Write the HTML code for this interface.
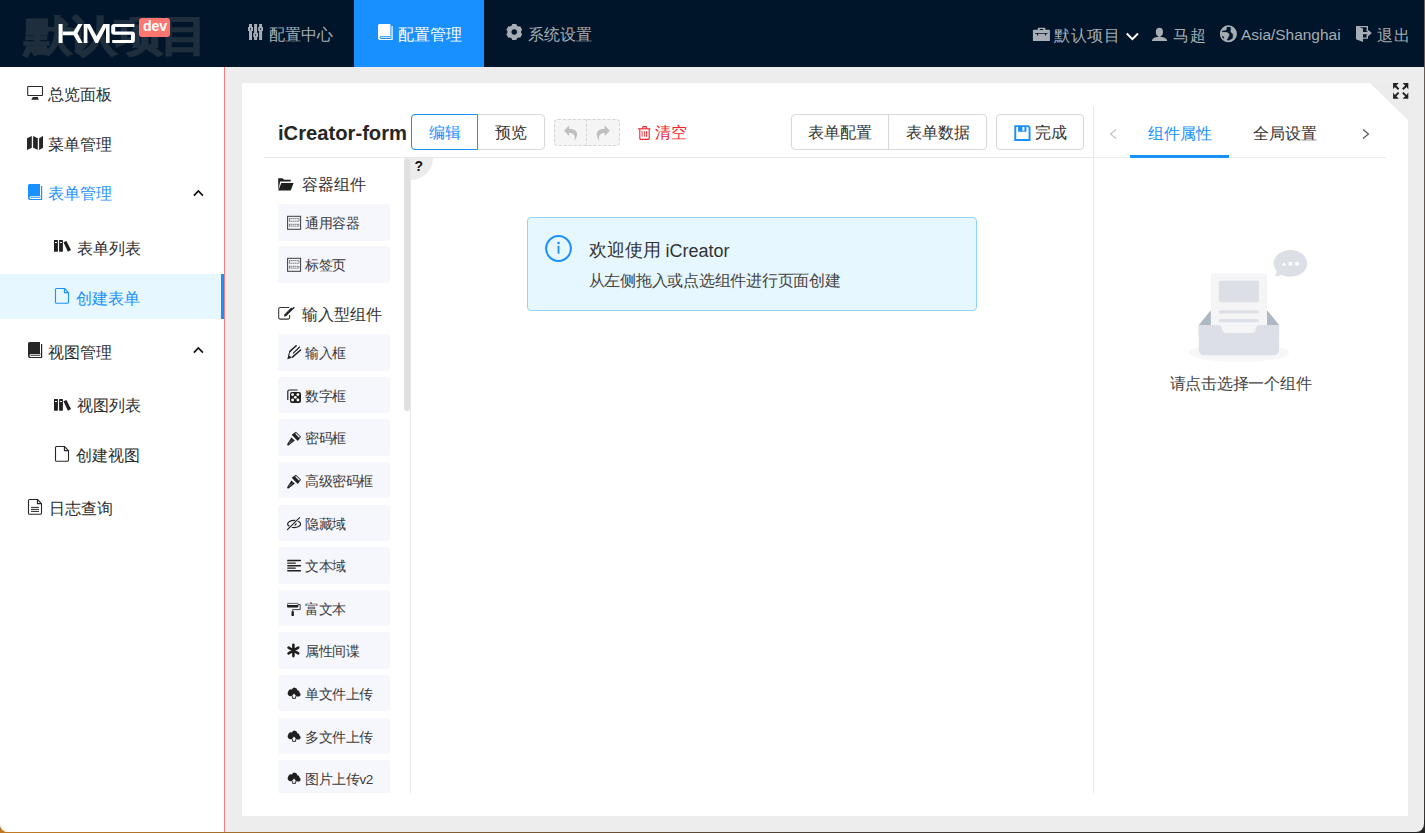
<!DOCTYPE html>
<html><head><meta charset="utf-8">
<style>
*{box-sizing:border-box;margin:0;padding:0}
html,body{width:1425px;height:833px;overflow:hidden;background:linear-gradient(90deg,#c27a22 0,#9a6a30 300px,#4a4038 800px,#252525 1425px);font-family:"Liberation Sans",sans-serif}
.a{position:absolute;white-space:nowrap}
#win{position:absolute;left:0;top:0;width:1424px;height:832px;background:#ededed;overflow:hidden;border-radius:0 0 8px 8px}
#hdr{position:absolute;left:0;top:0;width:1424px;height:67px;background:#001529}
.ht{color:#a6adb4;font-size:15.75px;line-height:20px}
#side{position:absolute;left:0;top:67px;width:225px;height:765px;background:#fff;border-right:1px solid #ff7b7b}
.st{color:#2b2b2b;font-size:15.75px;line-height:20px}
#card{position:absolute;left:242px;top:83px;width:1166px;height:733px;background:#fff}
.ib{position:absolute;left:278px;width:112px;height:36.4px;background:#f6f7fd;border-radius:3px}
.it{color:#3a3a3a;font-size:13.5px;line-height:18px;letter-spacing:-0.4px}
svg{position:absolute;overflow:visible}
</style></head><body>
<div style="position:absolute;left:1424px;top:0;width:1px;height:820px;background:linear-gradient(180deg,#6e5e58 0,#5e4b3d 400px,#3a3530 820px)"></div>
<div id="win">
<div id="hdr"></div>
<div id="side"></div>
<div id="card"></div>
</div>
<!-- HEADER -->
<div class="a" style="left:24px;top:9.5px;font-size:45px;line-height:56px;font-weight:bold;color:#1e2e3c;-webkit-text-stroke:1.4px #1e2e3c;letter-spacing:-2.6px;transform:scale(1.07,0.94);transform-origin:0 0">默认项目</div>
<svg style="left:55px;top:20px" width="85" height="26" viewBox="55 20 85 26"><g fill="#fff">
<path d="M58.6 24 H62.6 V43 H58.6Z"/>
<path d="M62.6 31.4 H73.6 L78.2 24 H82.6 L77.4 33.3 L82.6 43 H78.2 L73.6 35.2 H62.6Z"/>
<path d="M83.7 24 H89.9 L96.6 36.2 L103.4 24 H109.6 V43 H106 V27.6 L97.8 43 H95.3 L87.4 27.6 V43 H83.7Z"/>
<path d="M114.2 24 H134.4 V27.1 H115.2 V31.6 H131.9 A3 3 0 0 1 134.9 34.6 V39.8 A3 3 0 0 1 131.9 43 H112.2 V39.9 H131 V34.8 H114.2 A3 3 0 0 1 111.2 31.8 V27 A3 3 0 0 1 114.2 24Z"/>
</g></svg>
<div class="a" style="left:139px;top:18px;width:31px;height:19px;background:#ff7570;border-radius:3px;color:#fff;font-weight:bold;font-size:14.2px;line-height:16.5px;text-align:center;padding-left:1px;letter-spacing:-0.2px">dev</div>
<svg style="left:244px;top:20px" width="24" height="24" viewBox="244 20 24 24"><path fill="#a6adb4" fill-rule="evenodd" d="M249 24 H252 V27 H253 V31 H252 V40 H249 V31 H248 V27 H249Z M250 28.2 V29.8 H251 V28.2Z M254.1 24 H257.1 V33 H258 V37 H257.1 V40 H254.1 V37 H253.2 V33 H254.1Z M255.1 34.2 V35.8 H256.1 V34.2Z M259.1 24 H262.1 V27 H263 V31 H262.1 V40 H259.1 V31 H258.2 V27 H259.1Z M260.1 28.2 V29.8 H261.1 V28.2Z"/></svg>
<div class="a ht" style="left:269px;top:25px">配置中心</div>
<div class="a" style="left:354px;top:0;width:130px;height:67px;background:#1890ff"></div>
<svg style="left:377.6px;top:24px" width="15" height="16" viewBox="0 0 15 16"><g transform="scale(1.035,1)"><path fill="#fff" d="M1.5 0 H12 V11.9 H0 V1.5 A1.5 1.5 0 0 1 1.5 0Z M13 2 H14.2 V12 H13Z M0 11.8 H14.2 V16 H2 A2 2 0 0 1 0 14Z"/><path fill="#1890ff" d="M2.9 12.2 H13 V15 H2.9 A1.4 1.4 0 0 1 2.9 12.2Z"/><path fill="#fff" d="M2.8 13.15 H12.2 V14.05 H2.8 A0.45 0.45 0 0 1 2.8 13.15Z"/></g></svg>
<div class="a ht" style="left:398px;top:24.5px;color:#fff">配置管理</div>
<svg style="left:500px;top:20px" width="26" height="26" viewBox="500 20 26 26"><path fill="#a6adb4" fill-rule="evenodd" d="M511.55 25.70 L512.25 24.00 L516.25 24.00 L516.95 25.70 A6.3 6.3 0 0 1 518.36 26.51 L520.18 26.27 L522.18 29.73 L521.06 31.19 A6.3 6.3 0 0 1 521.06 32.81 L522.18 34.27 L520.18 37.73 L518.36 37.49 A6.3 6.3 0 0 1 516.95 38.30 L516.25 40.00 L512.25 40.00 L511.55 38.30 A6.3 6.3 0 0 1 510.14 37.49 L508.32 37.73 L506.32 34.27 L507.44 32.81 A6.3 6.3 0 0 1 507.44 31.19 L506.32 29.73 L508.32 26.27 L510.14 26.51 A6.3 6.3 0 0 1 511.55 25.70Z M514.25 29.20 A2.7 2.8 0 1 0 514.25 34.80 A2.7 2.8 0 1 0 514.25 29.20Z"/></svg>
<div class="a ht" style="left:528px;top:24.5px">系统设置</div>

<svg style="left:1030px;top:22px" width="24" height="24" viewBox="1030 22 24 24"><path fill="#a6adb4" fill-rule="evenodd" d="M1038.3 27.8 H1044.8 A0.5 0.5 0 0 1 1045.3 28.3 V29.8 H1049.4 A0.5 0.5 0 0 1 1049.9 30.3 V40.5 A0.5 0.5 0 0 1 1049.4 41 H1033.4 A0.5 0.5 0 0 1 1032.9 40.5 V30.3 A0.5 0.5 0 0 1 1033.4 29.8 H1037.8 V28.3 A0.5 0.5 0 0 1 1038.3 27.8Z M1039.9 29 V29.9 H1043.1 V29 Z"/><path fill="#001529" d="M1035.4 33 H1047.4 A0.4 0.4 0 0 1 1047.4 33.8 H1046.1 V35.4 H1045 V33.8 H1038.1 V35.4 H1037 V33.8 H1035.4 A0.4 0.4 0 0 1 1035.4 33Z"/></svg>
<div class="a ht" style="left:1054px;top:26px;letter-spacing:0.6px">默认项目</div>
<svg style="left:1120px;top:26px" width="24" height="20" viewBox="1120 26 24 20"><path d="M1126.8 33.5 L1132.4 39.1 L1138 33.5" fill="none" stroke="#fff" stroke-width="2"/></svg>
<svg style="left:1148px;top:22px" width="24" height="24" viewBox="1148 22 24 24"><g fill="#a6adb4"><ellipse cx="1159.4" cy="32.1" rx="3.6" ry="4.3"/><path d="M1158.4 36 H1160.4 V36.7 C1164 36.9 1167.2 38.5 1167.2 41 H1151.9 C1151.9 38.5 1155 36.9 1158.4 36.7Z"/></g></svg>
<div class="a ht" style="left:1173px;top:26px;letter-spacing:0.6px">马超</div>
<svg style="left:1216px;top:22px" width="24" height="24" viewBox="1216 22 24 24"><circle cx="1228.4" cy="33.9" r="8.3" fill="#a6adb4"/><g fill="#001529" stroke="#001529" stroke-width="0.3" stroke-linejoin="round"><path d="M1227.00 27.05 L1230.40 27.05 L1230.70 29.50 L1230.30 31.50 L1231.60 33.20 L1232.70 34.10 L1232.70 38.10 L1231.00 39.30 L1228.40 40.40 L1227.00 39.90 L1228.10 38.10 L1229.30 35.80 L1229.50 34.10 L1228.40 33.00 L1227.00 32.10 L1224.60 31.90 L1222.05 31.80 L1222.20 30.90 L1225.50 30.60 L1226.70 29.50Z"/><path d="M1222.3 36 C1223.2 36.1 1224 37 1224 37.9 C1224 38.4 1223.5 38.5 1223.1 38.2 C1222.6 37.7 1222.2 36.9 1222.3 36Z"/></g><circle cx="1228.4" cy="33.9" r="7.75" fill="none" stroke="#a6adb4" stroke-width="1.2"/></svg>
<div class="a ht" style="left:1241px;top:25px;font-size:15.45px">Asia/Shanghai</div>
<svg style="left:1352px;top:22px" width="24" height="24" viewBox="1352 22 24 24"><g fill="#a6adb4"><path d="M1356 26 H1368 V31.6 H1366.6 V27.3 H1359.5 L1363 28.5 V41.9 L1356 39.3Z"/><path d="M1366.6 34.3 H1368 V38.7 H1363 V37.6 H1366.6Z"/><path d="M1363 31.9 H1367.8 V29.7 L1371.9 33.1 L1367.8 36.5 V34.2 H1363Z"/></g></svg>
<div class="a ht" style="left:1377px;top:26px;letter-spacing:0.8px">退出</div>
<!-- SIDEBAR -->
<div class="a" style="left:0;top:274px;width:221px;height:45px;background:#e6f7ff"></div>
<div class="a" style="left:221px;top:274px;width:3px;height:45px;background:#1890ff"></div>
<svg style="left:24px;top:81px" width="24" height="24" viewBox="24 81 24 24"><rect x="27.7" y="86.4" width="14.8" height="9" rx="0.5" fill="none" stroke="#262626" stroke-width="1.05"/><path d="M32.9 97 H37.8 L38.7 99.7 H31.2Z" fill="#262626"/></svg>
<div class="a st" style="left:48px;top:85px">总览面板</div>
<svg style="left:24px;top:131px" width="24" height="24" viewBox="24 131 24 24"><g fill="#262626"><path d="M27 138.2 L31.8 136 V147.7 L27 150Z"/><path d="M33.1 136 L37.8 138.3 V149.8 L33.1 147.7Z"/><path d="M39.1 138.3 L43 135.9 V147.7 L39.1 150Z"/></g></svg>
<div class="a st" style="left:48px;top:134.5px">菜单管理</div>
<svg style="left:28px;top:184px" width="15" height="16" viewBox="0 0 15 16"><g transform="scale(1.0,1)"><path fill="#1890ff" d="M1.5 0 H12 V11.9 H0 V1.5 A1.5 1.5 0 0 1 1.5 0Z M13 2 H14.2 V12 H13Z M0 11.8 H14.2 V16 H2 A2 2 0 0 1 0 14Z"/><path fill="#fff" d="M2.9 12.2 H13 V15 H2.9 A1.4 1.4 0 0 1 2.9 12.2Z"/><path fill="#1890ff" d="M2.8 13.15 H12.2 V14.05 H2.8 A0.45 0.45 0 0 1 2.8 13.15Z"/></g></svg>
<div class="a st" style="left:48px;top:184px;color:#1890ff">表单管理</div>
<svg style="left:188px;top:182px" width="20" height="20" viewBox="188 182 20 20"><path d="M193.9 195.6 L198.4 190.9 L202.9 195.6" fill="none" stroke="#111" stroke-width="1.7"/></svg>
<svg style="left:50px;top:234px" width="24" height="24" viewBox="50 234 24 24"><path fill="#1f1f1f" fill-rule="evenodd" d="M54.4 239.9 H57.5 A0.4 0.4 0 0 1 57.9 240.3 V251.3 A0.4 0.4 0 0 1 57.5 251.7 H54.4 A0.4 0.4 0 0 1 54 251.3 V240.3 A0.4 0.4 0 0 1 54.4 239.9Z M55 242.1 V242.9 H56.9 V242.1Z M59.5 239.9 H62.5 A0.4 0.4 0 0 1 62.9 240.3 V251.3 A0.4 0.4 0 0 1 62.5 251.7 H59.5 A0.4 0.4 0 0 1 59.1 251.3 V240.3 A0.4 0.4 0 0 1 59.5 239.9Z M60 242.1 V242.9 H62 V242.1Z"/><path fill="#1f1f1f" d="M63.5 242.2 L66.4 241.1 L71 250.1 L67.9 251.7Z"/></svg>
<div class="a st" style="left:77px;top:239px">表单列表</div>
<svg style="left:50px;top:284px" width="24" height="24" viewBox="50 284 24 24"><path d="M56.6 288.5 H64.4 L68.5 292.6 V302 A1.3 1.3 0 0 1 67.2 303.3 H56.6 A1.1 1.1 0 0 1 55.5 302.2 V289.6 A1.1 1.1 0 0 1 56.6 288.5Z M64.4 288.5 V292.6 H68.5" fill="none" stroke="#1890ff" stroke-width="1.1" stroke-linejoin="round"/></svg>
<div class="a st" style="left:76px;top:288.5px;color:#1890ff">创建表单</div>
<svg style="left:28px;top:342px" width="15" height="16" viewBox="0 0 15 16"><g transform="scale(1.0,1)"><path fill="#262626" d="M1.5 0 H12 V11.9 H0 V1.5 A1.5 1.5 0 0 1 1.5 0Z M13 2 H14.2 V12 H13Z M0 11.8 H14.2 V16 H2 A2 2 0 0 1 0 14Z"/><path fill="#fff" d="M2.9 12.2 H13 V15 H2.9 A1.4 1.4 0 0 1 2.9 12.2Z"/><path fill="#262626" d="M2.8 13.15 H12.2 V14.05 H2.8 A0.45 0.45 0 0 1 2.8 13.15Z"/></g></svg>
<div class="a st" style="left:48px;top:342.5px">视图管理</div>
<svg style="left:188px;top:339px" width="20" height="20" viewBox="188 182 20 20"><path d="M193.9 195.6 L198.4 190.9 L202.9 195.6" fill="none" stroke="#111" stroke-width="1.7"/></svg>
<svg style="left:50px;top:392.5px" width="24" height="24" viewBox="50 234 24 24"><path fill="#1f1f1f" fill-rule="evenodd" d="M54.4 239.9 H57.5 A0.4 0.4 0 0 1 57.9 240.3 V251.3 A0.4 0.4 0 0 1 57.5 251.7 H54.4 A0.4 0.4 0 0 1 54 251.3 V240.3 A0.4 0.4 0 0 1 54.4 239.9Z M55 242.1 V242.9 H56.9 V242.1Z M59.5 239.9 H62.5 A0.4 0.4 0 0 1 62.9 240.3 V251.3 A0.4 0.4 0 0 1 62.5 251.7 H59.5 A0.4 0.4 0 0 1 59.1 251.3 V240.3 A0.4 0.4 0 0 1 59.5 239.9Z M60 242.1 V242.9 H62 V242.1Z"/><path fill="#1f1f1f" d="M63.5 242.2 L66.4 241.1 L71 250.1 L67.9 251.7Z"/></svg>
<div class="a st" style="left:77px;top:396px">视图列表</div>
<svg style="left:50px;top:442px" width="24" height="24" viewBox="50 284 24 24"><path d="M56.6 288.5 H64.4 L68.5 292.6 V302 A1.3 1.3 0 0 1 67.2 303.3 H56.6 A1.1 1.1 0 0 1 55.5 302.2 V289.6 A1.1 1.1 0 0 1 56.6 288.5Z M64.4 288.5 V292.6 H68.5" fill="none" stroke="#262626" stroke-width="1.1" stroke-linejoin="round"/></svg>
<div class="a st" style="left:76px;top:446px">创建视图</div>
<svg style="left:23px;top:495px" width="24" height="24" viewBox="23 495 24 24"><g fill="none" stroke="#262626" stroke-width="1.1" stroke-linejoin="round"><path d="M29.6 499.5 H37.4 L41.5 503.6 V513 A1.3 1.3 0 0 1 40.2 514.3 H29.6 A1.1 1.1 0 0 1 28.5 513.2 V500.6 A1.1 1.1 0 0 1 29.6 499.5Z M37.4 499.5 V503.6 H41.5"/></g><g stroke="#262626" stroke-width="1" stroke-linecap="round"><path d="M31.4 507.4 H38.6 M31.4 509.4 H38.6 M31.4 511.4 H38.6"/></g></svg>
<div class="a st" style="left:48.5px;top:499px">日志查询</div>
<!-- CARD -->
<svg style="left:1370px;top:83px" width="38" height="37" viewBox="0 0 38 37"><path d="M0 0 H38 V37Z" fill="#ececec"/></svg>
<svg style="left:1389px;top:80px" width="22" height="22" viewBox="1389 80 22 22"><path fill="#222" d="M1393.10 83.00 L1398.80 83.00 L1396.30 85.50 L1399.30 88.50 L1397.90 89.90 L1394.90 86.90 L1393.10 89.20Z M1408.30 83.00 L1402.60 83.00 L1405.10 85.50 L1402.10 88.50 L1403.50 89.90 L1406.50 86.90 L1408.30 89.20Z M1393.10 98.80 L1398.80 98.80 L1396.30 96.30 L1399.30 93.30 L1397.90 91.90 L1394.90 94.90 L1393.10 92.60Z M1408.30 98.80 L1402.60 98.80 L1405.10 96.30 L1402.10 93.30 L1403.50 91.90 L1406.50 94.90 L1408.30 92.60Z"/></svg>

<div class="a" style="left:278px;top:120px;font-size:20.2px;line-height:26px;font-weight:bold;color:#262626">iCreator-form</div>
<!-- radio group -->
<div class="a" style="left:411px;top:114px;width:134px;height:36px;border:1px solid #d9d9d9;border-radius:4px"></div>
<div class="a" style="left:411px;top:114px;width:67px;height:36px;border:1px solid #1890ff;border-radius:4px 0 0 4px;background:#fff"></div>
<div class="a" style="left:429px;top:123px;font-size:15.75px;line-height:20px;color:#1890ff">编辑</div>
<div class="a" style="left:495px;top:123px;font-size:15.75px;line-height:20px;color:#333">预览</div>
<!-- undo redo -->
<div class="a" style="left:554px;top:119px;width:66px;height:27px;border:1px dashed #d4d4d4;border-radius:4px;background:#f5f5f5"></div>
<div class="a" style="left:586px;top:119px;width:0;height:27px;border-left:1px dashed #d4d4d4"></div>
<svg style="left:559px;top:121px" width="24" height="24" viewBox="559 121 24 24"><path fill="#bfbfbf" d="M564 130.8 L569.1 125.6 V128.8 C572.5 128.9 575.2 129.8 576.6 132.2 C577.6 134 577.3 136.5 574.6 140.9 C575.2 137.5 574.8 135.5 573.7 134.5 C572.5 133.4 570.8 133.1 569.1 133.1 V136Z"/></svg>
<svg style="left:591px;top:121px" width="24" height="24" viewBox="591 121 24 24"><g transform="translate(1173.85 0) scale(-1 1)"><path fill="#bfbfbf" d="M564 130.8 L569.1 125.6 V128.8 C572.5 128.9 575.2 129.8 576.6 132.2 C577.6 134 577.3 136.5 574.6 140.9 C575.2 137.5 574.8 135.5 573.7 134.5 C572.5 133.4 570.8 133.1 569.1 133.1 V136Z"/></g></svg>
<!-- clear -->
<svg style="left:632px;top:121px" width="24" height="24" viewBox="632 121 24 24"><g fill="none" stroke="#f5222d" stroke-width="1.1"><path d="M638 128.8 H650.4"/><path d="M642.4 128.8 L643 126.6 H646 L646.6 128.8"/><path d="M639.8 129 V138.4 A1 1 0 0 0 640.8 139.4 H648.2 A1 1 0 0 0 649.2 138.4 V129"/></g><g fill="#f5222d"><rect x="641.4" y="131.1" width="1.6" height="5.6" opacity="0.55"/><rect x="644.1" y="131.1" width="0.8" height="5.6"/><rect x="646.1" y="131.1" width="0.9" height="5.6"/></g></svg>
<div class="a" style="left:655px;top:123px;font-size:15.75px;line-height:20px;color:#f5222d">清空</div>
<!-- btn group -->
<div class="a" style="left:791px;top:114px;width:196px;height:36px;border:1px solid #d9d9d9;border-radius:4px"></div>
<div class="a" style="left:888px;top:114px;width:1px;height:36px;background:#d9d9d9"></div>
<div class="a" style="left:808px;top:123px;font-size:15.75px;line-height:20px;color:#333">表单配置</div>
<div class="a" style="left:906px;top:123px;font-size:15.75px;line-height:20px;color:#333">表单数据</div>
<div class="a" style="left:996px;top:114px;width:88px;height:36px;border:1px solid #d9d9d9;border-radius:4px"></div>
<svg style="left:1010px;top:121px" width="24" height="24" viewBox="1010 121 24 24"><path fill="#1890ff" fill-rule="evenodd" d="M1014.3 125.2 H1028.6 L1030.5 127.3 V140.9 H1014.3Z M1016.2 127.1 V139 H1028.6 V128.1 L1027.8 127.1 H1026.4 V131.8 H1018.1 V127.1Z M1022.4 127.1 V130.8 H1024.4 V127.1Z"/></svg>
<div class="a" style="left:1035px;top:123px;font-size:15.75px;line-height:20px;color:#333">完成</div>

<!-- dividers -->
<div class="a" style="left:264px;top:157px;width:829px;height:1px;background:#ece6e6"></div><div class="a" style="left:1094px;top:157px;width:292px;height:1px;background:#edeeee"></div>
<div class="a" style="left:1093px;top:106px;width:1px;height:687px;background:#ece6e6"></div>
<div class="a" style="left:410px;top:158px;width:1px;height:635px;background:#ece6e6"></div>

<!-- tabs -->
<svg style="left:1108.5px;top:129px" width="8" height="10" viewBox="0 0 8 10"><path d="M7 0.5 L1.5 5 L7 9.5" fill="none" stroke="#c4c4c4" stroke-width="1.2"/></svg>
<div class="a" style="left:1148px;top:124px;font-size:15.75px;line-height:20px;color:#1890ff">组件属性</div>
<div class="a" style="left:1130px;top:155px;width:99px;height:3px;background:#1890ff"></div>
<div class="a" style="left:1253px;top:124px;font-size:15.75px;line-height:20px;color:#333">全局设置</div>
<svg style="left:1361.5px;top:129px" width="8" height="10" viewBox="0 0 8 10"><path d="M1 0.5 L6.5 5 L1 9.5" fill="none" stroke="#555" stroke-width="1.2"/></svg>

<!-- scrollbar + ? -->
<div class="a" style="left:404px;top:158px;width:6px;height:253px;background:#e0e0e0;border-radius:3px"></div>
<div class="a" style="left:411px;top:158px;width:22px;height:22px;background:#ececec;border-radius:0 0 22px 0"></div>
<div class="a" style="left:414.5px;top:157px;font-size:14px;line-height:18px;font-weight:bold;color:#111">?</div>

<!-- alert -->
<div class="a" style="left:527px;top:217px;width:450px;height:94px;background:#e6f7ff;border:1px solid #91d5ff;border-radius:4px"></div>
<svg style="left:545px;top:235px" width="27" height="27" viewBox="0 0 27 27"><circle cx="13.5" cy="13.5" r="12.4" fill="none" stroke="#1890ff" stroke-width="2"/><circle cx="13.5" cy="8" r="1.3" fill="#1890ff"/><rect x="12.6" y="10.8" width="1.8" height="8" fill="#1890ff"/></svg>
<div class="a" style="left:588.5px;top:239px;font-size:18px;line-height:23px;color:#333">欢迎使用 <span style="position:relative;top:1.2px">iCreator</span></div>
<div class="a" style="left:588.5px;top:271px;font-size:15.75px;letter-spacing:-0.25px;line-height:20px;color:#444">从左侧拖入或点选组件进行页面创建</div>

<!-- empty -->
<svg style="left:1171.4px;top:250px" width="136.2" height="112.5" viewBox="0 0 184 152">
<defs><linearGradient x1="52.946%" y1="13.16%" x2="52.946%" y2="100%" id="lg1"><stop stop-color="#DCE0E6" offset="0%"/><stop stop-color="#AEB8C2" offset="100%"/></linearGradient></defs>
<g fill="none" fill-rule="evenodd">
<g transform="translate(24 31.67)">
<ellipse fill-opacity=".8" fill="#F5F5F7" cx="67.797" cy="106.89" rx="67.797" ry="12.668"/>
<path d="M122.034 69.674L98.109 40.229c-1.148-1.386-2.826-2.225-4.593-2.225h-51.44c-1.766 0-3.444.839-4.592 2.225L13.56 69.674v15.383h108.475V69.674z" fill="#AEB8C2"/>
<path d="M101.537 86.214L80.63 61.102c-1.001-1.207-2.507-1.867-4.048-1.867H31.724c-1.54 0-3.047.66-4.048 1.867L6.769 86.214v13.792h94.768V86.214z" fill="url(#lg1)" transform="translate(13.56)"/>
<path d="M33.83 0h67.933a4 4 0 0 1 4 4v93.344a4 4 0 0 1-4 4H33.83a4 4 0 0 1-4-4V4a4 4 0 0 1 4-4z" fill="#F5F5F7"/>
<path d="M42.678 9.953h50.237a2 2 0 0 1 2 2V36.91a2 2 0 0 1-2 2H42.678a2 2 0 0 1-2-2V11.953a2 2 0 0 1 2-2zM42.94 49.767h49.713a2.262 2.262 0 1 1 0 4.524H42.94a2.262 2.262 0 0 1 0-4.524zM42.94 61.53h49.713a2.262 2.262 0 1 1 0 4.525H42.94a2.262 2.262 0 0 1 0-4.525zM121.813 105.032c-.775 3.071-3.497 5.36-6.735 5.36H20.515c-3.238 0-5.96-2.29-6.734-5.36a7.309 7.309 0 0 1-.222-1.79V69.675h26.318c2.907 0 5.25 2.448 5.25 5.42v.04c0 2.971 2.37 5.37 5.277 5.37h34.785c2.907 0 5.277-2.421 5.277-5.393V75.1c0-2.972 2.343-5.426 5.25-5.426h26.318v33.569c0 .617-.077 1.216-.221 1.789z" fill="#DCE0E6"/>
</g>
<path d="M149.121 33.292l-6.83 2.65a1 1 0 0 1-1.317-1.23l1.937-6.207c-2.589-2.944-4.109-6.534-4.109-10.408C138.802 8.102 148.92 0 161.402 0 173.881 0 184 8.102 184 18.097c0 9.995-10.118 18.097-22.599 18.097-4.528 0-8.744-1.066-12.28-2.902z" fill="#DCE0E6"/>
<g transform="translate(149.65 15.383)" fill="#FFF"><ellipse cx="20.654" cy="3.167" rx="2.849" ry="2.815"/><path d="M5.698 5.63H0L2.898.704zM9.259.704h4.985V5.63H9.259z"/></g>
</g></svg>
<div class="a" style="left:1169.5px;top:374px;letter-spacing:-0.25px;font-size:15.75px;line-height:20px;color:#444">请点击选择一个组件</div>
<div class="a" style="left:0;top:0;width:1425px;height:793px;overflow:hidden">
<svg style="left:274px;top:172px" width="24" height="24" viewBox="274 172 24 24"><path fill="#1f1f1f" d="M278.2 178.2 H282.4 L284.1 179.8 H290.7 V181.5 H280.2 L278.3 190.4Z"/><path fill="#1f1f1f" d="M281.3 183.1 H293.6 L290.7 190.6 H278.3Z"/></svg>
<div class="a" style="left:302px;top:174.5px;font-size:15.75px;line-height:20px;color:#333">容器组件</div>
<div class="ib" style="top:204.2px"></div>
<svg style="left:283px;top:204.2px" width="22" height="42" viewBox="283 0 22 42"><rect x="287.6" y="12.3" width="13" height="13" fill="none" stroke="#3a3a3a" stroke-width="1"/><g stroke="#555" stroke-width="0.9" stroke-dasharray="1.3 0.7"><path d="M289.2 14.6 H299.2 M289.2 17.2 H299.2 M289.2 20.3 H299.2 M289.2 22.1 H299.2"/></g><path d="M289.4 14.4 V17.3 M299 14.4 V17.3 M289.4 20.2 V22.2 M299 20.2 V22.2" stroke="#666" stroke-width="0.7"/></svg>
<div class="a it" style="left:305px;top:215.2px">通用容器</div>
<div class="ib" style="top:246.4px"></div>
<svg style="left:283px;top:246.4px" width="22" height="42" viewBox="283 0 22 42"><rect x="287.6" y="12.3" width="13" height="13" fill="none" stroke="#3a3a3a" stroke-width="1"/><g stroke="#555" stroke-width="0.9" stroke-dasharray="1.3 0.7"><path d="M289.2 14.6 H299.2 M289.2 17.2 H299.2 M289.2 20.3 H299.2 M289.2 22.1 H299.2"/></g><path d="M289.4 14.4 V17.3 M299 14.4 V17.3 M289.4 20.2 V22.2 M299 20.2 V22.2" stroke="#666" stroke-width="0.7"/></svg>
<div class="a it" style="left:305px;top:257.4px">标签页</div>
<svg style="left:274px;top:302px" width="24" height="24" viewBox="274 302 24 24"><path d="M289.2 307.5 H280.2 A1.5 1.5 0 0 0 278.7 309 V317.6 A1.5 1.5 0 0 0 280.2 319.1 H288.1 A1.5 1.5 0 0 0 289.6 317.6 V315" fill="none" stroke="#333" stroke-width="1.05"/><path d="M284.9 315.6 L292.2 308.3" stroke="#1f1f1f" stroke-width="2.6"/><path d="M285.5 313.9 L290.9 308.5" stroke="#bbb" stroke-width="0.5" stroke-dasharray="0.8 0.5"/><path d="M292.9 307.6 L293.9 308.6" stroke="#1f1f1f" stroke-width="2.6"/><path d="M283.9 316.6 L284.2 315 L285.6 316.3Z" fill="#1f1f1f"/></svg>
<div class="a" style="left:302px;top:305px;font-size:15.75px;line-height:20px;color:#333">输入型组件</div>
<div class="ib" style="top:334.2px"></div>
<svg style="left:283px;top:334.2px" width="22" height="42" viewBox="283 0 22 42"><g fill="none" stroke="#1f1f1f" stroke-linecap="round"><path d="M289.9 17.4 L296.2 11.8" stroke-width="1.5"/><path d="M293.3 19.2 L299.6 13" stroke-width="1.1"/><path d="M292.4 23.1 L300.6 16" stroke-width="1.5"/><path d="M289.9 17.4 L288.6 21.5" stroke-width="1"/></g><path d="M287.2 25.3 L288.6 21 L291.9 23.7Z" fill="#1f1f1f"/></svg>
<div class="a it" style="left:305px;top:345.2px">输入框</div>
<div class="ib" style="top:376.8px"></div>
<svg style="left:283px;top:376.8px" width="22" height="42" viewBox="283 0 22 42"><path d="M287.8 23 V14.6 A1.6 1.6 0 0 1 289.4 13 H297.6" fill="none" stroke="#1f1f1f" stroke-width="1.2"/><rect x="290" y="15" width="11" height="11" rx="2" fill="#1f1f1f"/><g fill="#fff"><circle cx="292.6" cy="17.6" r="1.4"/><circle cx="297.9" cy="17.6" r="1.4"/><circle cx="295.3" cy="20.3" r="1.4"/><circle cx="292.6" cy="23" r="1.4"/><circle cx="297.9" cy="23" r="1.4"/></g></svg>
<div class="a it" style="left:305px;top:387.8px">数字框</div>
<div class="ib" style="top:419.4px"></div>
<svg style="left:283px;top:419.4px" width="22" height="42" viewBox="283 0 22 42"><path d="M291.7 15.8 L295.9 12.8 L301 17.8 L297.8 22Z" fill="#1f1f1f"/><path d="M295.6 14.4 L299.5 18.2" stroke="#f6f7fd" stroke-width="1.2"/><path d="M291.4 18.4 L294.8 21.6 L288.6 26.5 L287.1 26.2 L287.4 24.7Z" fill="#1f1f1f"/><path d="M292.2 21.4 L288.8 24.6" stroke="#f6f7fd" stroke-width="0.7" stroke-dasharray="0.9 0.7"/></svg>
<div class="a it" style="left:305px;top:430.4px">密码框</div>
<div class="ib" style="top:462.0px"></div>
<svg style="left:283px;top:462.0px" width="22" height="42" viewBox="283 0 22 42"><path d="M291.7 15.8 L295.9 12.8 L301 17.8 L297.8 22Z" fill="#1f1f1f"/><path d="M295.6 14.4 L299.5 18.2" stroke="#f6f7fd" stroke-width="1.2"/><path d="M291.4 18.4 L294.8 21.6 L288.6 26.5 L287.1 26.2 L287.4 24.7Z" fill="#1f1f1f"/><path d="M292.2 21.4 L288.8 24.6" stroke="#f6f7fd" stroke-width="0.7" stroke-dasharray="0.9 0.7"/></svg>
<div class="a it" style="left:305px;top:473.0px">高级密码框</div>
<div class="ib" style="top:504.6px"></div>
<svg style="left:283px;top:504.6px" width="22" height="42" viewBox="283 0 22 42"><ellipse cx="294.1" cy="19" rx="6.5" ry="3.6" fill="none" stroke="#1f1f1f" stroke-width="1.2"/><path d="M293.8 16.6 A2.6 2.6 0 0 1 296.6 19.6 L294.6 21 Z" fill="#1f1f1f"/><path d="M287.6 24.8 L299.8 12.6" stroke="#f6f7fd" stroke-width="2.4"/><path d="M287.4 24.7 L299.6 12.6" stroke="#1f1f1f" stroke-width="1.1" stroke-linecap="round"/></svg>
<div class="a it" style="left:305px;top:515.6px">隐藏域</div>
<div class="ib" style="top:547.2px"></div>
<svg style="left:283px;top:547.2px" width="22" height="42" viewBox="283 0 22 42"><g fill="#1f1f1f"><rect x="287.2" y="12.7" width="13.8" height="1.5" rx="0.5"/><rect x="287.2" y="15.4" width="8.6" height="1.3" rx="0.5"/><rect x="287.2" y="17.9" width="13.8" height="1.7" rx="0.5"/><rect x="287.2" y="20.5" width="8.6" height="1.3" rx="0.5"/><rect x="287.2" y="22.9" width="13.8" height="1.7" rx="0.5"/></g><rect x="287.2" y="14.2" width="8.6" height="1.2" fill="#aaa"/></svg>
<div class="a it" style="left:305px;top:558.2px">文本域</div>
<div class="ib" style="top:589.8px"></div>
<svg style="left:283px;top:589.8px" width="22" height="42" viewBox="283 0 22 42"><rect x="287.6" y="13.4" width="10.4" height="3.6" rx="0.4" fill="none" stroke="#555" stroke-width="0.9"/><rect x="287.2" y="15" width="10.8" height="2.3" fill="#1f1f1f"/><path d="M298 14.6 H300.2 V19.6 H292.7 V21.4" fill="none" stroke="#444" stroke-width="1"/><rect x="291.5" y="21.2" width="2.4" height="4.8" rx="0.4" fill="#1f1f1f"/></svg>
<div class="a it" style="left:305px;top:600.8px">富文本</div>
<div class="ib" style="top:632.4px"></div>
<svg style="left:283px;top:632.4px" width="22" height="42" viewBox="283 0 22 42"><path d="M293.40 12.90 L293.40 24.10 M288.55 15.70 L298.25 21.30 M288.55 21.30 L298.25 15.70 " stroke="#1f1f1f" stroke-width="2.6" stroke-linecap="round"/></svg>
<div class="a it" style="left:305px;top:643.4px">属性间谍</div>
<div class="ib" style="top:675.0px"></div>
<svg style="left:283px;top:675.0px" width="22" height="42" viewBox="283 0 22 42"><path d="M290.4 21.3 A3.1 3.1 0 0 1 288.2 16.4 A3 3 0 0 1 292 14.6 A2.7 2.7 0 0 1 297.3 15.2 A2.3 2.3 0 0 1 299.5 17.5 A2.1 2.1 0 0 1 298.9 21.4 L296.4 21.4 L294.1 18.4 L291.8 21.3 Z" fill="#1f1f1f"/><path d="M292.6 21.2 V23.4 H295.6 V21.2" fill="none" stroke="#1f1f1f" stroke-width="0.9"/></svg>
<div class="a it" style="left:305px;top:686.0px">单文件上传</div>
<div class="ib" style="top:717.6px"></div>
<svg style="left:283px;top:717.6px" width="22" height="42" viewBox="283 0 22 42"><path d="M290.4 21.3 A3.1 3.1 0 0 1 288.2 16.4 A3 3 0 0 1 292 14.6 A2.7 2.7 0 0 1 297.3 15.2 A2.3 2.3 0 0 1 299.5 17.5 A2.1 2.1 0 0 1 298.9 21.4 L296.4 21.4 L294.1 18.4 L291.8 21.3 Z" fill="#1f1f1f"/><path d="M292.6 21.2 V23.4 H295.6 V21.2" fill="none" stroke="#1f1f1f" stroke-width="0.9"/></svg>
<div class="a it" style="left:305px;top:728.6px">多文件上传</div>
<div class="ib" style="top:760.2px"></div>
<svg style="left:283px;top:760.2px" width="22" height="42" viewBox="283 0 22 42"><path d="M290.4 21.3 A3.1 3.1 0 0 1 288.2 16.4 A3 3 0 0 1 292 14.6 A2.7 2.7 0 0 1 297.3 15.2 A2.3 2.3 0 0 1 299.5 17.5 A2.1 2.1 0 0 1 298.9 21.4 L296.4 21.4 L294.1 18.4 L291.8 21.3 Z" fill="#1f1f1f"/><path d="M292.6 21.2 V23.4 H295.6 V21.2" fill="none" stroke="#1f1f1f" stroke-width="0.9"/></svg>
<div class="a it" style="left:305px;top:771.2px">图片上传v2</div>
</div>
</body></html>
